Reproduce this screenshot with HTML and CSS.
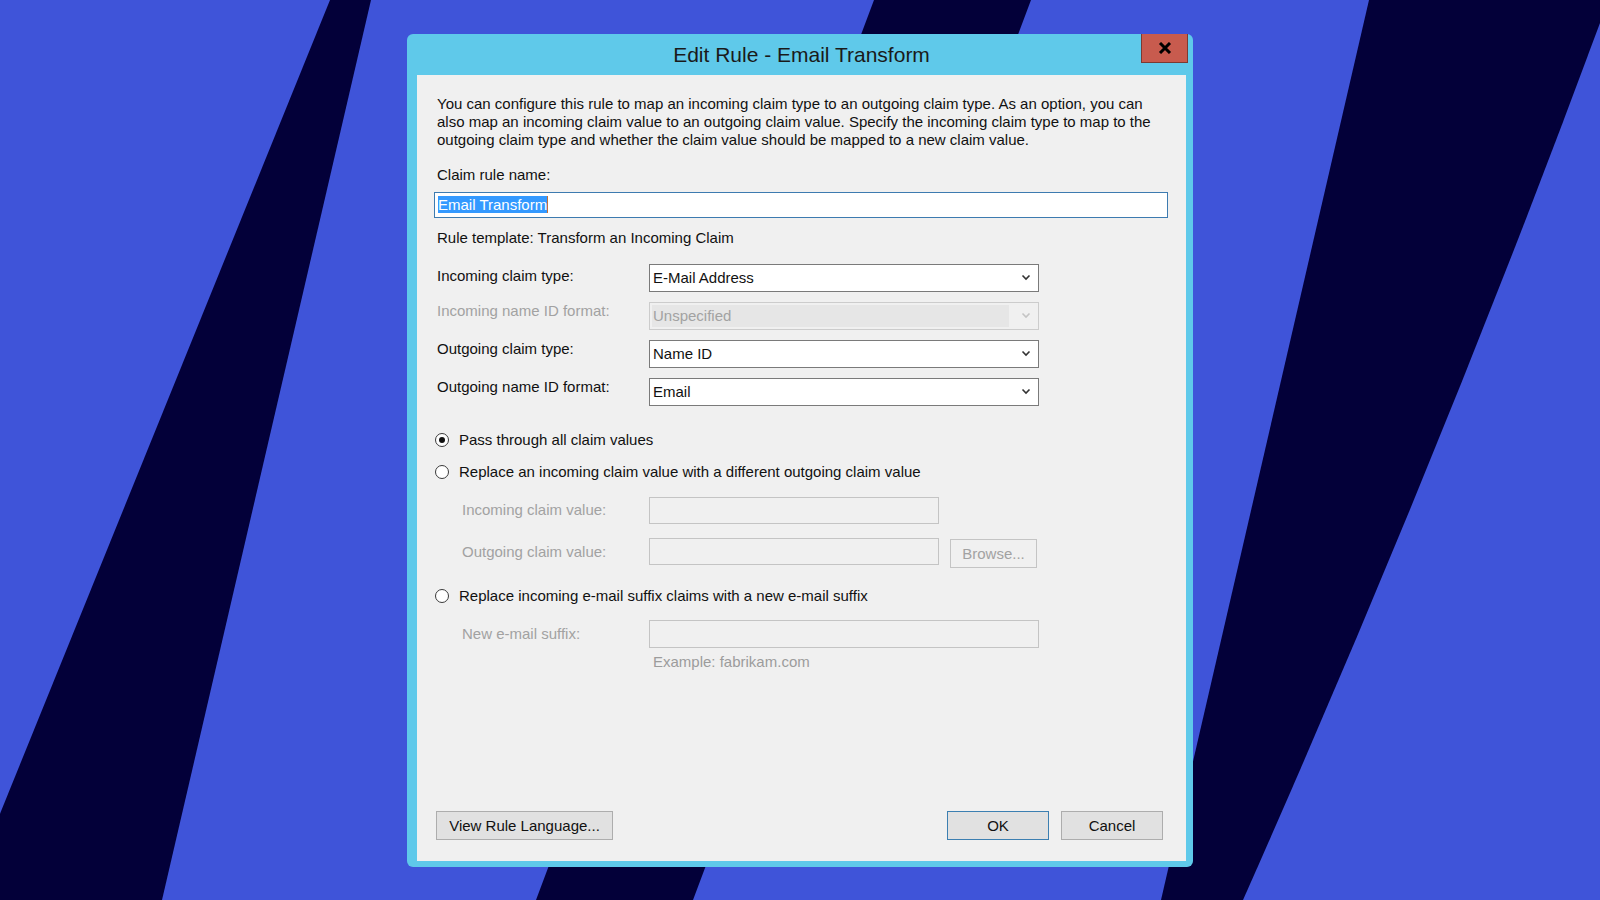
FILE: index.html
```html
<!DOCTYPE html>
<html lang="en">
<head>
    <meta charset="UTF-8">
    <title>Edit Rule - Email Transform</title>
    <link rel="stylesheet" href="styles.css">
</head>
<body>
<svg class="backdrop" viewBox="0 0 1600 900" preserveAspectRatio="none">
    <path d="M330 0 L371 0 L162 900 L-35 900 Z" />
    <path d="M874 0 L1031 0 L693 900 L536 900 Z" />
    <path d="M1369 0 L1600 0 L1600 23 Q1440 456 1243 900 L1161 900 Z" />
</svg>

<div class="dialog">
    <div class="title-bar">
        <span class="title">Edit Rule - Email Transform</span>
        <button class="close-button">
            <svg width="14" height="12" viewBox="0 0 14 12"><path d="M2 1 L12 11 M12 1 L2 11" /></svg>
        </button>
    </div>

    <div class="content">
        <p class="intro">You can configure this rule to map an incoming claim type to an outgoing claim type. As an option, you can also map an incoming claim value to an outgoing claim value. Specify the incoming claim type to map to the outgoing claim type and whether the claim value should be mapped to a new claim value.</p>

        <div class="label rule-name-label">Claim rule name:</div>
        <div class="text-input name-input"><span class="selected">Email Transform</span><span class="caret"></span></div>

        <div class="label template">Rule template: Transform an Incoming Claim</div>

        <div class="field-grid">
            <div class="label first-label">Incoming claim type:</div>
            <div class="combo"><span>E-Mail Address</span><svg class="arrow" viewBox="0 0 10 7"><path d="M1.5 1.5 L5 5 L8.5 1.5" /></svg></div>

            <div class="label disabled">Incoming name ID format:</div>
            <div class="combo combo-disabled"><span>Unspecified</span><svg class="arrow" viewBox="0 0 10 7"><path d="M1.5 1.5 L5 5 L8.5 1.5" /></svg></div>

            <div class="label">Outgoing claim type:</div>
            <div class="combo"><span>Name ID</span><svg class="arrow" viewBox="0 0 10 7"><path d="M1.5 1.5 L5 5 L8.5 1.5" /></svg></div>

            <div class="label">Outgoing name ID format:</div>
            <div class="combo"><span>Email</span><svg class="arrow" viewBox="0 0 10 7"><path d="M1.5 1.5 L5 5 L8.5 1.5" /></svg></div>
        </div>

        <div class="radio-row first-radio">
            <span class="radio checked"></span>
            <span class="label">Pass through all claim values</span>
        </div>
        <div class="radio-row">
            <span class="radio"></span>
            <span class="label">Replace an incoming claim value with a different outgoing claim value</span>
        </div>

        <div class="sub-grid">
            <div class="label disabled">Incoming claim value:</div>
            <div class="text-input small disabled-input"></div>
            <div></div>

            <div class="label disabled">Outgoing claim value:</div>
            <div class="text-input small disabled-input"></div>
            <button class="win-button browse">Browse...</button>
        </div>

        <div class="radio-row suffix-radio">
            <span class="radio"></span>
            <span class="label">Replace incoming e-mail suffix claims with a new e-mail suffix</span>
        </div>

        <div class="sub-grid suffix-grid">
            <div class="label disabled">New e-mail suffix:</div>
            <div class="text-input wide disabled-input"></div>
            <div class="label example">Example: fabrikam.com</div>
        </div>

        <div class="footer">
            <button class="win-button rule-language">View Rule Language...</button>
            <div class="footer-right">
                <button class="win-button default">OK</button>
                <button class="win-button">Cancel</button>
            </div>
        </div>
    </div>
</div>
</body>
</html>
```

FILE: styles.css
```css
body {
    margin: 0;
    height: 100vh;
    background-color: #3f54d9;
    display: flex;
    justify-content: center;
    align-items: center;
    font-family: "Liberation Sans", Arial, sans-serif;
    font-size: 15px;
    color: #111;
    overflow: hidden;
}

.backdrop {
    position: absolute;
    left: 0;
    top: 0;
    width: 100%;
    height: 100%;
}

.backdrop path {
    fill: #030039;
}

.dialog {
    position: relative;
    width: 786px;
    height: 833px;
    box-sizing: border-box;
    background: #5fc9ea;
    border-radius: 6px;
    padding: 0 7px 6px 10px;
    display: flex;
    flex-direction: column;
}

.title-bar {
    height: 41px;
    display: flex;
    align-items: center;
    justify-content: center;
}

.title {
    font-size: 21px;
    color: #1a1a1a;
    margin-top: 2px;
}

.close-button {
    position: absolute;
    top: 0;
    right: 5px;
    width: 47px;
    height: 29px;
    background: #c85b4e;
    border: 1px solid #7b3a33;
    border-top: none;
    padding: 0;
    display: flex;
    align-items: center;
    justify-content: center;
}

.close-button path {
    stroke: #000;
    stroke-width: 3;
}

.content {
    flex: 1;
    background: #f0f0f0;
    padding: 20px 18px 21px 20px;
    display: flex;
    flex-direction: column;
}

.intro {
    margin: 0;
    line-height: 18.4px;
}

.label {
    line-height: 18px;
    white-space: nowrap;
}

.disabled {
    color: #a2a2a2;
}

.rule-name-label {
    margin-top: 16px;
}

.text-input {
    box-sizing: border-box;
    height: 26px;
    background: #fff;
    border: 1px solid #7a7a7a;
    display: flex;
    align-items: center;
}

.name-input {
    margin: 8px 0 0 -3px;
    border-color: #3d7bb0;
    padding-left: 3px;
}

.selected {
    background: #3399ff;
    color: #fff;
    line-height: 17px;
}

.caret {
    width: 1px;
    height: 17px;
    background: #c0703a;
}

.template {
    margin-top: 11px;
}

.field-grid {
    margin-top: 17px;
    display: grid;
    grid-template-columns: 212px 390px;
    row-gap: 10px;
    align-items: start;
}

.first-label {
    margin-top: 3px;
}

.combo {
    box-sizing: border-box;
    height: 28px;
    background: #fff;
    border: 1px solid #7a7a7a;
    display: flex;
    align-items: center;
    justify-content: space-between;
    padding: 0 7px 0 3px;
}

.combo-disabled {
    background: #f0f0f0;
    border-color: #cccccc;
    color: #a2a2a2;
    padding: 2px 7px 2px 2px;
}

.combo-disabled span {
    background: #e6e6e6;
    align-self: stretch;
    flex: 1;
    margin-right: 12px;
    line-height: 22px;
    padding-left: 1px;
}

.arrow {
    width: 10px;
    height: 7px;
}

.arrow path {
    fill: none;
    stroke: #333;
    stroke-width: 1.6;
}

.combo-disabled .arrow path {
    stroke: #c4c4c4;
}

.radio-row {
    display: flex;
    align-items: center;
    height: 20px;
    margin-top: 12px;
    margin-left: -2px;
    gap: 10px;
}

.first-radio {
    margin-top: 24px;
}

.radio {
    box-sizing: border-box;
    width: 14px;
    height: 14px;
    border: 1px solid #3a3a3a;
    border-radius: 50%;
    background: #fff;
    display: flex;
    align-items: center;
    justify-content: center;
}

.radio.checked::after {
    content: "";
    width: 6px;
    height: 6px;
    border-radius: 50%;
    background: #111;
}

.sub-grid {
    margin-top: 15px;
    margin-left: 25px;
    display: grid;
    grid-template-columns: 176px 290px 87px;
    column-gap: 11px;
    row-gap: 12px;
    align-items: center;
}

.text-input.small {
    height: 27px;
}

.disabled-input {
    background: #f0f0f0;
    border-color: #c4c4c4;
}

.suffix-radio {
    margin-top: 18px;
}

.suffix-grid {
    margin-top: 14px;
    grid-template-columns: 176px 390px;
    row-gap: 5px;
}

.text-input.wide {
    height: 28px;
}

.example {
    grid-column: 2;
    padding-left: 4px;
    color: #9c9c9c;
}

.footer {
    margin-top: auto;
    display: flex;
    justify-content: space-between;
    align-items: center;
    margin-left: -1px;
    margin-right: 5px;
}

.footer-right {
    display: flex;
    gap: 12px;
}

.win-button {
    box-sizing: border-box;
    height: 29px;
    width: 102px;
    padding: 0;
    font-family: inherit;
    font-size: 15px;
    color: #111;
    background: #e1e1e1;
    border: 1px solid #adadad;
}

.win-button.rule-language {
    width: 177px;
}

.win-button.default {
    border-color: #3c7fb1;
}

.browse {
    width: 87px;
    color: #a2a2a2;
    background: #f0f0f0;
    border-color: #c4c4c4;
    margin-top: 3px;
}
```
